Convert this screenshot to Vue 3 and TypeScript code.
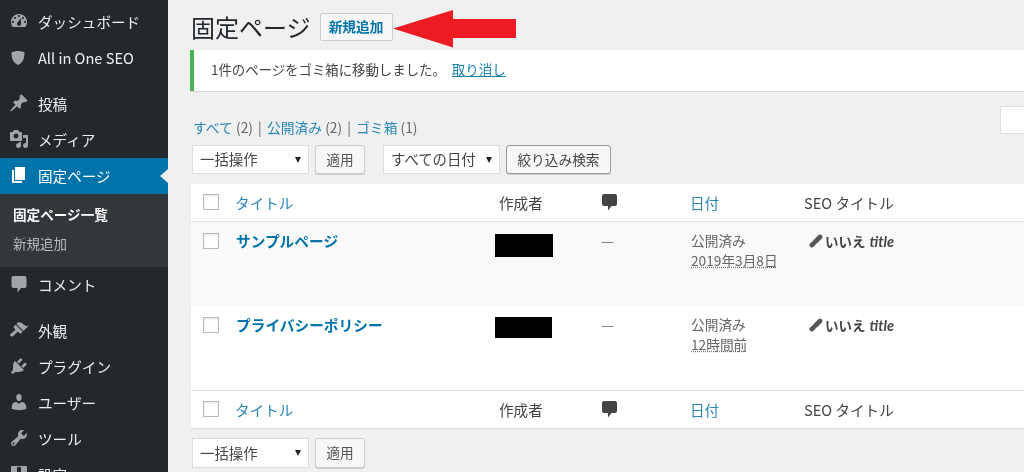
<script setup lang="ts">
interface MenuItem { label: string; d: string; vb?: string; gap?: boolean; active?: boolean; cls?: string }
const commentPath = 'M2 0h11a2 2 0 0 1 2 2v8a2 2 0 0 1-2 2H9.500L6 16.500V12H2a2 2 0 0 1-2-2V2a2 2 0 0 1 2-2z'
const d = {
  dash: 'M3.760 16h12.480c1.100-1.370 1.760-3.110 1.760-5 0-4.420-3.580-8-8-8s-8 3.580-8 8c0 1.890.66 3.630 1.760 5zM10 4c.55 0 1 .45 1 1s-.45 1-1 1-1-.45-1-1 .45-1 1-1zM6 6c.55 0 1 .45 1 1s-.45 1-1 1-1-.45-1-1 .45-1 1-1zm8 0c.55 0 1 .45 1 1s-.45 1-1 1-1-.45-1-1 .45-1 1-1zm-5.370 5.550L12 7v6c0 1.100-.9 2-2 2s-2-.9-2-2c0-.57.24-1.080.63-1.450zM4 10c.55 0 1 .45 1 1s-.45 1-1 1-1-.45-1-1 .45-1 1-1zm12 0c.55 0 1 .45 1 1s-.45 1-1 1-1-.45-1-1 .45-1 1-1z',
  shield: 'M9 4c2.300 0 4.600.5 6.500 1.500 0 5.500-1.300 10-6.500 12.500C3.800 15.500 2.500 11 2.500 5.500 4.400 4.500 6.700 4 9 4z',
  pin: 'M10.440 3.020l1.820-1.820 6.360 6.350-1.830 1.820c-1.050-.68-2.480-.57-3.410.36l-.75.75c-.92.93-1.040 2.350-.35 3.410l-1.830 1.820-2.410-2.410-2.800 2.790c-.42.42-3.380 2.710-3.800 2.290s1.860-3.390 2.280-3.810l2.790-2.790L4.100 9.360l1.830-1.820c1.050.69 2.480.57 3.400-.36l.75-.75c.93-.92 1.050-2.350.36-3.410z',
  media: 'M13 11V4c0-.55-.45-1-1-1h-1.670L9 1H5L3.670 3H2c-.55 0-1 .45-1 1v7c0 .55.45 1 1 1h10c.55 0 1-.45 1-1zM7 4.500c1.380 0 2.500 1.120 2.500 2.500S8.380 9.500 7 9.500 4.500 8.380 4.500 7 5.620 4.500 7 4.500zM14 6h5v10.500c0 1.380-1.120 2.500-2.500 2.500S14 17.880 14 16.500s1.120-2.500 2.500-2.500c.17 0 .34.02.5.05V9h-3V6zm-4 8.050V13h2v3.500c0 1.380-1.120 2.500-2.500 2.500S7 17.880 7 16.500 8.120 14 9.500 14c.17 0 .34.02.5.05z',
  page: 'M6 15V2h10v13H6zm-1 1h8v2H3V5h2v11z',
  brush: 'M14.480 11.060L7.410 3.990l1.500-1.500c.5-.56 2.300-.47 3.510.32 1.210.8 1.430 1.280 2.910 2.100 1.180.64 2.450 1.260 4.450.85zm-.71.71L6.700 4.700 4.930 6.470c-.39.39-.39 1.020 0 1.410l1.060 1.060c.39.39.39 1.030 0 1.420-.6.6-1.430 1.110-2.210 1.690-.35.26-.7.53-1.010.84C1.430 13.230.4 14.960 1.500 16.060c.95.95 2.260.47 3.280-.47.43-.4.83-.84 1.210-1.250.79-.85 1.750-1.810 2.150-2.210.39-.39 1.020-.39 1.410 0l1.070 1.060c.39.39 1.020.39 1.410 0z',
  plugin: 'M13.110 4.360L9.870 7.600 8 5.730l3.240-3.240c.35-.34 1.050-.2 1.560.32.52.51.66 1.210.31 1.550zm-8 1.770l.91-1.120 9.010 9.010-1.190.84c-.71.71-2.630 1.160-3.820 1.160H6.140L4.900 17.260c-.59.59-1.540.59-2.120 0-.59-.58-.59-1.530 0-2.120l1.240-1.240v-3.880c0-1.130.4-3.190 1.090-3.890zm7.260 3.970l3.240-3.240c.34-.35 1.040-.21 1.550.31.52.51.66 1.210.31 1.550l-3.240 3.250z',
  user: 'M10 9.250c-2.270 0-2.730-3.440-2.730-3.440C7 4.020 7.820 2 9.970 2c2.160 0 2.980 2.020 2.710 3.810 0 0-.41 3.440-2.680 3.440zm0 2.570L12.720 10c2.390 0 4.520 2.330 4.520 4.530v2.490s-3.650 1.130-7.240 1.130c-3.650 0-7.240-1.130-7.240-1.130v-2.490c0-2.250 1.940-4.480 4.470-4.480z',
  tool: 'M16.680 9.770c-1.340 1.340-3.300 1.670-4.950.99l-5.410 6.520c-.99.99-2.590.99-3.580 0s-.99-2.590 0-3.570l6.520-5.420c-.68-1.650-.35-3.610.99-4.950 1.280-1.280 3.120-1.620 4.720-1.060l-2.890 2.890 2.820 2.820 2.860-2.870c.53 1.580.18 3.390-1.080 4.650zM3.810 16.210c.4.39 1.040.39 1.430 0 .4-.4.4-1.040 0-1.430-.39-.4-1.030-.4-1.430 0-.39.39-.39 1.030 0 1.430z',
  settings: 'M3 2h14c.55 0 1 .45 1 1v14c0 .55-.45 1-1 1H3c-.55 0-1-.45-1-1V3c0-.55.45-1 1-1zm5 1v5H6l4 4 4-4h-2V3z',
}
const upper: MenuItem[] = [
  { label: 'ダッシュボード', d: d.dash },
  { label: 'All in One SEO', d: d.shield },
  { label: '投稿', d: d.pin, gap: true },
  { label: 'メディア', d: d.media },
  { label: '固定ページ', d: d.page, active: true },
]
const lower: MenuItem[] = [
  { label: 'コメント', d: commentPath, vb: '-2.500 -2 20 20' },
  { label: '外観', d: d.brush, gap: true },
  { label: 'プラグイン', d: d.plugin },
  { label: 'ユーザー', d: d.user },
  { label: 'ツール', d: d.tool },
  { label: '設定', d: d.settings },
]
const rows = [
  { title: 'サンプルページ', date: '2019年3月8日', boxH: 23, cls: 'alt', top: 'r1' },
  { title: 'プライバシーポリシー', date: '12時間前', boxH: 21, cls: '', top: 'r2' },
]
</script>

<template>
  <div class="page">
    <aside class="side">
      <div v-for="m in upper" :key="m.label" class="item" :class="{ gap: m.gap, active: m.active }">
        <svg class="ico" viewBox="0 0 20 20"><path :d="m.d" /></svg>
        <span>{{ m.label }}</span>
      </div>
      <div class="sub">
        <div class="sub-item current">固定ページ一覧</div>
        <div class="sub-item">新規追加</div>
      </div>
      <div v-for="m in lower" :key="m.label" class="item" :class="{ gap: m.gap }">
        <svg class="ico" :viewBox="m.vb || '0 0 20 20'"><path :d="m.d" /></svg>
        <span>{{ m.label }}</span>
      </div>
    </aside>

    <main class="main">
      <div class="head">
        <h1>固定ページ</h1>
        <a class="add">新規追加</a>
        <svg class="arrow" viewBox="0 0 124 38"><path d="M0 18.500L60 0V9H123V28H60V37.500z" /></svg>
      </div>

      <div class="notice">1件のページをゴミ箱に移動しました。 <a>取り消し</a></div>

      <div class="views">
        <div class="links">
          <a>すべて</a> (2) <i>|</i> <a>公開済み</a> (2) <i>|</i> <a>ゴミ箱</a> (1)
        </div>
        <div class="search"></div>
      </div>

      <div class="bar">
        <div class="sel bulk"><span>一括操作</span><b></b></div>
        <button class="btn">適用</button>
        <div class="sel date"><span>すべての日付</span><b></b></div>
        <button class="btn strong">絞り込み検索</button>
      </div>

      <div class="table">
        <div class="row hd">
          <span class="cb"><input type="checkbox" /></span>
          <a class="c-title">タイトル</a>
          <span>作成者</span>
          <svg class="cm" viewBox="0 0 15 17"><path :d="commentPath" /></svg>
          <a>日付</a>
          <span>SEO タイトル</span>
        </div>
        <div v-for="r in rows" :key="r.title" class="row body" :class="[r.cls, r.top]">
          <span class="cb"><input type="checkbox" /></span>
          <a class="name">{{ r.title }}</a>
          <span><span class="mask" :style="{ height: r.boxH + 'px' }"></span></span>
          <span class="dash">—</span>
          <span class="dt">公開済み<br /><u>{{ r.date }}</u></span>
          <span class="seo">
            <svg class="pen" viewBox="0 0 14 14"><path d="M2.800 11.200L4.500 9.500M6.500 7.500L11 3" /></svg>
            <b>いいえ</b> <b class="it">title</b>
          </span>
        </div>
        <div class="row hd ft">
          <span class="cb"><input type="checkbox" /></span>
          <a class="c-title">タイトル</a>
          <span>作成者</span>
          <svg class="cm" viewBox="0 0 15 17"><path :d="commentPath" /></svg>
          <a>日付</a>
          <span>SEO タイトル</span>
        </div>
      </div>

      <div class="bar bottom">
        <div class="sel bulk"><span>一括操作</span><b></b></div>
        <button class="btn">適用</button>
      </div>
    </main>
  </div>
</template>

<style>
html, body { margin: 0; overflow: hidden; background: #f0f0f0; }
</style>

<style scoped>
.page {
  display: flex;
  width: 1024px;
  height: 472px;
  overflow: hidden;
  background: #f0f0f0;
  color: #555;
  font-family: "Noto Sans CJK JP", "Open Sans", sans-serif;
  font-size: 14px;
  filter: blur(0.35px);
}
a { color: #0073aa; text-decoration: none; }
.side { width: 168px; flex: none; background: #23282d; padding-top: 4px; box-sizing: border-box; }
.item {
  position: relative;
  display: flex;
  align-items: center;
  height: 36px;
  padding-left: 9px;
  padding-bottom: 2px;
  box-sizing: border-box;
  color: #eee;
  font-size: 14.600px;
}
.item.gap { margin-top: 10px; }
.item.active { background: #0073aa; color: #fff; }
.item.active::after {
  content: "";
  position: absolute;
  right: 0;
  top: 11px;
  border: 7px solid transparent;
  border-left-width: 0;
  border-right: 8px solid #f0f0f0;
}
.ico { width: 20px; height: 20px; margin-right: 9px; fill: #a0a5aa; flex: none; }
.active .ico { fill: #fff; }
.sub { background: #32373c; height: 73px; padding-top: 7px; box-sizing: border-box; }
.sub-item { height: 29px; line-height: 26px; padding-left: 13px; font-size: 13.500px; color: #b4b9be; }
.sub-item.current { color: #fff; font-weight: 700; font-size: 13.600px; }

.main { flex: 1; min-width: 0; padding: 13px 0 0 23px; }
.head { position: relative; display: flex; align-items: center; height: 28px; }
h1 { margin: 0 9px 0 0; font-size: 24px; font-weight: 400; color: #23282d; line-height: 26px; white-space: nowrap; }
.add {
  display: block;
  box-sizing: border-box;
  width: 73px;
  height: 28px;
  line-height: 24px;
  text-align: center;
  font-size: 13.700px;
  font-weight: 700;
  background: #f7f7f7;
  border: 1px solid #ccc;
  border-radius: 2px;
}
.arrow { position: absolute; left: 202px; top: -3px; width: 124px; height: 38px; fill: #ed1c24; }
.notice {
  margin: 9px 0 0 -1px;
  height: 41px;
  box-sizing: border-box;
  padding-left: 17px;
  line-height: 39px;
  background: #fff;
  border-left: 4px solid #46b450;
  box-shadow: 0 1px 1px rgba(0,0,0,.1);
  font-size: 13.400px;
  color: #444;
  white-space: nowrap;
}
.notice a { margin-left: 3px; font-size: 13.500px; color: #1a82b5; text-decoration: underline; }
.views { display: flex; justify-content: space-between; align-items: flex-end; height: 28px; margin-top: 15px; }
.links { margin-left: 2px; font-size: 13.800px; line-height: 14px; white-space: nowrap; color: #666; }
.links a { color: #2a87b6; }
.links i { font-style: normal; margin: 0 2px; }
.search { width: 24px; height: 28px; box-sizing: border-box; background: #fff; border: 1px solid #ddd; border-right: 0; }
.bar { display: flex; align-items: center; height: 29px; margin-top: 11px; margin-left: 1px; }
.sel {
  display: flex;
  align-items: center;
  justify-content: space-between;
  box-sizing: border-box;
  height: 29px;
  width: 117px;
  padding: 0 7px 0 7px;
  background: #fff;
  border: 1px solid #ddd;
  font-size: 14.400px;
  color: #444;
  white-space: nowrap;
}
.sel span { position: relative; top: -1px; }
.sel b { width: 0; height: 0; border: 3px solid transparent; border-top: 6px solid #222; border-bottom: 0; }
.bulk { margin-right: 6px; }
.btn {
  box-sizing: border-box;
  height: 29px;
  width: 50px;
  padding: 0 0 2px;
  background: #f7f7f7;
  border: 1px solid #ccc;
  border-radius: 3px;
  box-shadow: 0 1px 0 #ccc;
  font: inherit;
  font-size: 13.700px;
  color: #555;
}
.date { margin-left: 18px; margin-right: 6px; }
.strong { width: 105px; border-color: #999; color: #444; }
.table {
  margin-top: 10px;
  box-shadow: 0 1px 1px rgba(0,0,0,.08);
  background: #fff;
}
.row {
  display: grid;
  grid-template-columns: 44px 264px 104px 87px 114px 1fr;
  white-space: nowrap;
}
.hd {
  height: 38px;
  padding-bottom: 1px;
  align-items: center;
  border-bottom: 1px solid #e1e1e1;
  box-sizing: border-box;
  font-size: 14.600px;
  color: #444;
}
.hd a { color: #2a87b6; }
.ft { border-bottom: 0; border-top: 1px solid #e1e1e1; }
.cb { display: flex; padding-left: 12px; }
.cb input {
  appearance: none;
  display: block;
  width: 16px;
  height: 16px;
  margin: 0;
  background: #fff;
  border: 1px solid #b4b9be;
  box-shadow: inset 0 1px 2px rgba(0,0,0,.1);
  box-sizing: border-box;
}
.cm { width: 15px; height: 17px; fill: #444; margin-left: -1px; }
.body { height: 84px; padding-top: 9px; box-sizing: border-box; background: #fff; }
.body.alt { background: #f9f9f9; }
.body.alt .mask { margin-top: 3px; width: 58px; }
.mask { display: block; width: 57px; margin-left: -4px; background: #000; margin-top: 2px; }
.body .cb { padding-top: 2px; }
.name { font-weight: 700; font-size: 14.700px; line-height: 20px; color: #0073aa; margin-left: 1px; }
.dash { color: #777; font-size: 14.500px; line-height: 19px; margin-left: -2px; }
.dt { font-size: 13.700px; line-height: 20px; color: #666; margin: -1px 0 0 1px; }
.dt u { text-decoration-style: dotted; text-decoration-color: #777; }
.seo { display: flex; align-items: center; height: 20px; margin-left: 5px; font-size: 13.500px; color: #444; }
.pen { width: 14px; height: 14px; fill: none; stroke: #555; stroke-width: 4.600; stroke-linecap: round; margin-right: 2px; }
.it { font-family: "Lato", sans-serif; font-style: italic; font-size: 14.500px; margin-left: 4px; }
.bottom { margin-top: 10px; height: 30px; }
.bottom .sel, .bottom .btn { height: 30px; }
</style>
